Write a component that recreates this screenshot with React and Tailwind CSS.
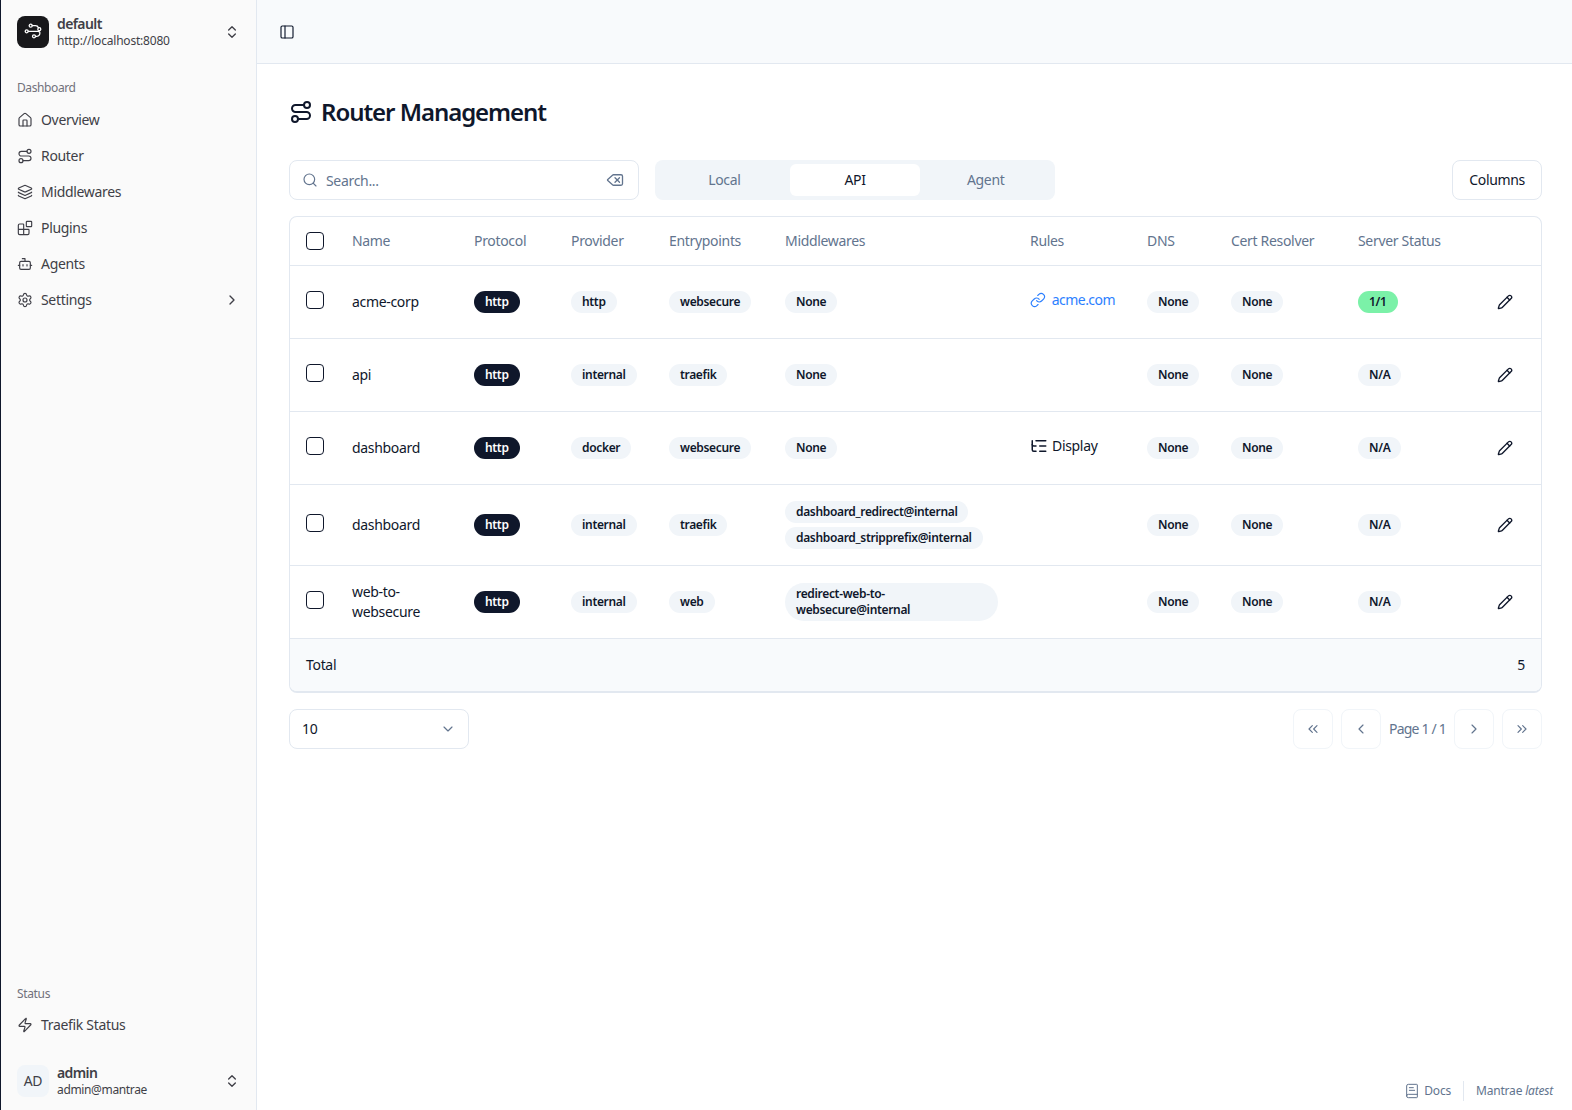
import {
  Blocks, BookText, Bot, ChevronDown, ChevronLeft, ChevronRight, ChevronsLeft, ChevronsRight,
  ChevronsUpDown, Delete, House, Layers, Link, ListTree, PanelLeft, Pencil, Route, Search,
  Settings, Zap,
} from 'lucide-react';

const navItems = [
  { label: 'Overview', icon: House },
  { label: 'Router', icon: Route },
  { label: 'Middlewares', icon: Layers },
  { label: 'Plugins', icon: Blocks },
  { label: 'Agents', icon: Bot },
  { label: 'Settings', icon: Settings, chevron: true },
];

const rows = [
  { name: 'acme-corp', provider: 'http', entry: 'websecure', middlewares: ['None'], rule: 'link', status: '1/1' },
  { name: 'api', provider: 'internal', entry: 'traefik', middlewares: ['None'], status: 'N/A' },
  { name: 'dashboard', provider: 'docker', entry: 'websecure', middlewares: ['None'], rule: 'display', status: 'N/A' },
  { name: 'dashboard', provider: 'internal', entry: 'traefik', middlewares: ['dashboard_redirect@internal', 'dashboard_stripprefix@internal'], status: 'N/A' },
  { name: 'web-to-websecure', provider: 'internal', entry: 'web', middlewares: ['redirect-web-to-websecure@internal'], status: 'N/A' },
];

const headers = ['Name', 'Protocol', 'Provider', 'Entrypoints', 'Middlewares', 'Rules', 'DNS', 'Cert Resolver', 'Server Status'];

function Badge({ children, className = 'bg-slate-100 text-slate-900' }) {
  return (
    <span className={`inline-flex w-fit items-center rounded-full px-[11px] py-[3px] text-xs leading-4 font-semibold tracking-[-0.33px] ${className}`}>
      {children}
    </span>
  );
}

function Checkbox({ className = 'mb-[3px]' }) {
  return <div className={`size-[18px] rounded-[4px] border border-slate-900 bg-white ${className}`} />;
}

// Profile logo, nodes joined by curved lines
function Logo() {
  return (
    <div className="flex size-8 items-center justify-center rounded-lg bg-zinc-900 text-white">
      <svg width="32" height="32" viewBox="0 0 32 32" fill="none" stroke="currentColor" strokeWidth="1.3" strokeLinecap="round">
        <circle cx="13.7" cy="9.7" r="1.5" />
        <circle cx="9.7" cy="15.3" r="1.5" />
        <circle cx="22.3" cy="13.2" r="1.5" />
        <circle cx="17" cy="20.3" r="1.5" />
        <path d="M15.2 9.7h3.3c1.4 0 2.5 .8 3 2M11.2 15.3h9.6c1 0 1.6 .2 2 .8M18.5 20.3h1.3c2.2 0 3.4-1.6 3-4.2" />
      </svg>
    </div>
  );
}

function Sidebar() {
  return (
    <aside className="flex w-[256px] shrink-0 flex-col border-r border-slate-200 bg-neutral-50 text-zinc-700">
      {/* Profile switcher */}
      <div className="flex h-[64px] items-center gap-2 px-[16px]">
        <Logo />
        <div className="flex min-w-0 flex-1 flex-col">
          <span className="text-sm leading-[18px] font-semibold tracking-[-0.6px]">default</span>
          <span className="text-xs leading-4 tracking-[-0.2px]">http://localhost:8080</span>
        </div>
        <ChevronsUpDown className="size-4" />
      </div>

      {/* Main nav */}
      <div className="flex flex-1 flex-col px-[16px]">
        <div className="mt-[10px] flex h-[28px] items-center text-xs tracking-[-0.4px] text-zinc-500">Dashboard</div>
        <nav className="flex flex-col">
          {navItems.map((item) => (
            <div key={item.label} className="flex h-9 items-center gap-2 text-sm">
              <item.icon className="size-4" strokeWidth={1.75} />
              <span className="flex-1">{item.label}</span>
              {item.chevron && <ChevronRight className="size-4" />}
            </div>
          ))}
        </nav>
        <div className="mt-auto flex h-[26px] items-center text-xs tracking-[-0.35px] text-zinc-500">Status</div>
        <div className="mb-[9px] flex h-9 items-center gap-2 text-sm">
          <Zap className="size-4" strokeWidth={1.75} />
          <span>Traefik Status</span>
        </div>
      </div>

      {/* User */}
      <div className="flex h-[58px] items-center gap-2 px-[16px]">
        <div className="flex size-8 items-center justify-center rounded-lg bg-slate-100 text-sm">AD</div>
        <div className="flex min-w-0 flex-1 flex-col">
          <span className="text-sm leading-[18px] font-semibold tracking-[-0.6px]">admin</span>
          <span className="text-xs leading-4 tracking-[-0.35px]">admin@mantrae</span>
        </div>
        <ChevronsUpDown className="size-4" />
      </div>
    </aside>
  );
}

function Toolbar() {
  return (
    <div className="flex items-center">
      <div className="flex h-10 w-[350px] items-center rounded-lg border border-slate-200 bg-white pr-[14px] pl-3 text-sm text-slate-500">
        <Search className="size-4" strokeWidth={1.75} />
        <span className="ml-2 flex-1 pt-px">Search...</span>
        <Delete className="size-[18px]" strokeWidth={1.75} />
      </div>
      <div className="ml-4 flex h-10 w-[400px] items-center rounded-lg bg-slate-100 p-1 text-sm text-slate-500">
        <div className="flex h-8 flex-1 items-center justify-center">Local</div>
        <div className="flex h-8 flex-1 items-center justify-center rounded-md bg-white text-slate-900">API</div>
        <div className="flex h-8 flex-1 items-center justify-center">Agent</div>
      </div>
      <button className="ml-auto h-10 rounded-lg border border-slate-200 bg-white px-4 text-sm text-slate-900">Columns</button>
    </div>
  );
}

function RouterTable() {
  return (
    <div className="mt-4 overflow-hidden rounded-lg border border-b-2 border-slate-200">
      <table className="w-full table-fixed border-collapse text-sm text-slate-900">
        <colgroup>
          <col className="w-[46px]" />
          <col className="w-[122px]" />
          <col className="w-[97px]" />
          <col className="w-[98px]" />
          <col className="w-[116px]" />
          <col className="w-[245px]" />
          <col className="w-[117px]" />
          <col className="w-[84px]" />
          <col className="w-[127px]" />
          <col />
        </colgroup>
        <thead>
          <tr className="h-[48px] border-b border-slate-200">
            <th className="pl-4 text-left font-normal"><Checkbox className="" /></th>
            {headers.map((h) => (
              <th key={h} className="px-4 text-left font-normal whitespace-nowrap text-slate-500">{h}</th>
            ))}
            <th />
          </tr>
        </thead>
        <tbody>
          {rows.map((row, i) => (
            <tr key={i} className={`border-b border-slate-200 ${row.middlewares.length > 1 ? 'h-[81px]' : 'h-[73px]'}`}>
              <td className="pl-4"><Checkbox /></td>
              <td className="px-4 leading-5">{row.name}</td>
              <td className="px-4"><Badge className="bg-slate-900 text-white">http</Badge></td>
              <td className="px-4"><Badge>{row.provider}</Badge></td>
              <td className="px-4"><Badge>{row.entry}</Badge></td>
              <td className="px-4">
                <div className="flex flex-col gap-1">
                  {row.middlewares.map((m) => (
                    <Badge key={m} className={`bg-slate-100 text-slate-900 ${m.startsWith('redirect') ? 'w-full' : ''}`}>{m}</Badge>
                  ))}
                </div>
              </td>
              <td className="px-4">
                {row.rule === 'link' && (
                  <span className="mb-[3px] flex items-center gap-[6px] tracking-[-0.55px] text-blue-500">
                    <Link className="size-[18px]" strokeWidth={1.75} />acme.com
                  </span>
                )}
                {row.rule === 'display' && (
                  <span className="mb-[3px] flex items-center gap-1">
                    <ListTree className="size-[18px]" strokeWidth={2} />Display
                  </span>
                )}
              </td>
              <td className="px-4"><Badge>None</Badge></td>
              <td className="px-4"><Badge>None</Badge></td>
              <td className="px-4">
                {row.status === '1/1' ? <Badge className="bg-green-300 text-slate-900">1/1</Badge> : <Badge>N/A</Badge>}
              </td>
              <td className="pr-[28px] text-right">
                <Pencil className="ml-auto size-4" />
              </td>
            </tr>
          ))}
        </tbody>
        <tfoot>
          <tr className="h-[53px] bg-slate-50">
            <td colSpan={6} className="px-4">Total</td>
            <td colSpan={5} className="px-4 text-right">5</td>
          </tr>
        </tfoot>
      </table>
    </div>
  );
}

function PagerButton({ icon: Icon }) {
  return (
    <button className="flex size-10 items-center justify-center rounded-lg border border-slate-100 bg-white text-slate-500">
      <Icon className="size-4" strokeWidth={1.75} />
    </button>
  );
}

function Pagination() {
  return (
    <div className="mt-4 flex items-center justify-between">
      <div className="flex h-10 w-[180px] items-center justify-between rounded-lg border border-slate-200 bg-white px-3 text-sm text-slate-900">
        10
        <ChevronDown className="size-4 text-slate-500" strokeWidth={1.75} />
      </div>
      <div className="flex items-center gap-2">
        <PagerButton icon={ChevronsLeft} />
        <PagerButton icon={ChevronLeft} />
        <span className="text-sm tracking-[-0.8px] text-slate-500">Page 1 / 1</span>
        <PagerButton icon={ChevronRight} />
        <PagerButton icon={ChevronsRight} />
      </div>
    </div>
  );
}

export default function App() {
  return (
    <div className="flex h-[1110px] overflow-hidden border-l border-slate-900 bg-white font-['Noto_Sans',sans-serif] tracking-[-0.32px]">
      <Sidebar />
      <main className="flex min-w-0 flex-1 flex-col">
        <header className="flex h-[64px] shrink-0 items-center border-b border-slate-200 bg-slate-50 px-[22px]">
          <PanelLeft className="size-4 text-slate-900" strokeWidth={1.75} />
        </header>
        <div className="flex flex-1 flex-col pt-[32px] pr-[30px] pl-[32px]">
          <h1 className="flex h-[32px] items-center gap-2 text-2xl font-semibold tracking-[-1.05px] text-slate-900">
            <Route className="size-6" strokeWidth={2} />
            Router Management
          </h1>
          <div className="mt-[32px]">
            <Toolbar />
            <RouterTable />
            <Pagination />
          </div>
          <footer className="-mr-[11px] mt-auto flex h-[38px] items-center justify-end text-xs tracking-[-0.2px] text-slate-500">
            <span className="flex h-5 items-center gap-1 border-r border-slate-200 pr-3"><BookText className="size-4" strokeWidth={1.5} />Docs</span>
            <span className="pl-3">Mantrae <i>latest</i></span>
          </footer>
        </div>
      </main>
    </div>
  );
}
